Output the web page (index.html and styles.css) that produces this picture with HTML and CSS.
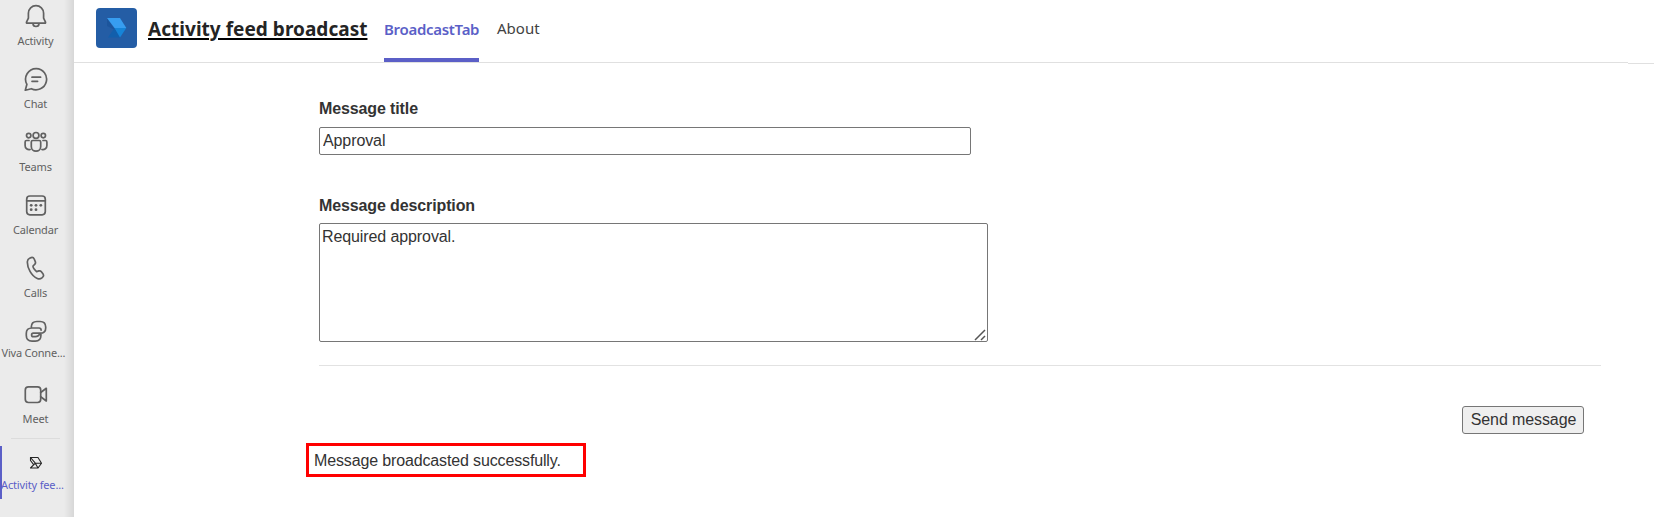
FILE: index.html
```
<!DOCTYPE html>
<html lang="en">
<head>
<meta charset="utf-8">
<title>Activity feed broadcast</title>
<link rel="stylesheet" href="styles.css">
</head>
<body>
<div class="app">
  <nav class="rail">
    <a class="rail-item"><svg class="icon" viewBox="0 0 24 24"><path d="M12 1.6a7.6 7.6 0 0 0-7.6 7.6v5L2.5 18.2q-.3 1 .7 1h17.6q1 0 .7-1l-1.9-4v-5A7.6 7.6 0 0 0 12 1.6zM9 19.5a3 3 0 0 0 6 0"/></svg><span class="label">Activity</span></a>
    <a class="rail-item"><svg class="icon" viewBox="0 0 24 24"><path d="M12.3 1.6a10.600 10.600 0 1 1-5 20.100L1.300 23.200l1.600-5.900A10.600 10.600 0 0 1 12.300 1.600zM8 10.200h8.600M8 14.300h5.600"/></svg><span class="label">Chat</span></a>
    <a class="rail-item"><svg class="icon" viewBox="0 0 24 24"><circle cx="12" cy="5.400" r="2.900"/><circle cx="4.700" cy="5.600" r="2.200"/><circle cx="19.300" cy="5.600" r="2.200"/><path d="M8.800 10.500h6.400q1.500 0 1.500 1.500v4.500a4.700 4.700 0 0 1-9.400 0V12q0-1.500 1.500-1.500zM5 10.500H2.600q-1.500 0-1.500 1.500v3.500a4 4 0 0 0 5 4M19 10.500h2.400q1.500 0 1.500 1.500v3.500a4 4 0 0 1-5 4"/></svg><span class="label">Teams</span></a>
    <a class="rail-item"><svg class="icon" viewBox="0 0 24 24"><rect x="2.700" y="3" width="18.600" height="18.800" rx="3.200"/><path d="M2.700 7.800h18.600"/><g class="dots"><circle cx="7.200" cy="12.300" r="1.400"/><circle cx="12" cy="12.300" r="1.400"/><circle cx="16.800" cy="12.300" r="1.400"/><circle cx="7.200" cy="16.700" r="1.400"/><circle cx="12" cy="16.700" r="1.400"/></g></svg><span class="label">Calendar</span></a>
    <a class="rail-item"><svg class="icon" viewBox="0 0 24 24"><path d="M5.600 2.200l1.600-.6q2.100-.6 3 1.400l1.100 2.600q.6 1.600-.6 2.700L9 10q-.2 2.200 3.600 5.600l2.300-.7q1.500-.4 2.500.9l1.700 2.300q1 1.600-.3 2.900l-.9.900q-2 1.700-4.600.6C7.500 20 3 11.500 3.400 5.500q.2-2.600 2.200-3.300z"/></svg><span class="label">Calls</span></a>
    <a class="rail-item viva"><svg class="icon" viewBox="0 0 24 24"><path d="M7.300 8.900V8.100q0-5.600 5.600-5.600h3.200q5.600 0 5.600 5.600v.8q0 5.300-5.600 5.300H9.300a1.700 1.700 0 0 0 0 3.400h2M16.900 14.300v2.200q0 5.600-5.600 5.600H8q-5.700 0-5.700-5.600v-2.200q0-5.300 5.700-5.300h7.100a2 2 0 0 1 2 2.200M11.300 17.600q3.600 0 4.600-3.300"/></svg><span class="label">Viva Conne...</span></a>
    <a class="rail-item"><svg class="icon" viewBox="0 0 24 24"><rect x="1.300" y="4.800" width="15.400" height="15.700" rx="3.200"/><path d="M16.700 10.500l5.600-4.200V19l-5.600-4.200"/></svg><span class="label">Meet</span></a>
    <div class="rail-divider"></div>
    <a class="rail-item active"><svg class="icon bird" viewBox="0 0 24 24"><path d="M6.500 6.500h7.500l3.500 5.700-3.500 4.800H6.500l4.800-4.800zM6.500 6.500l4.800 5.700h6.200M11.300 12.200L14 17M6.500 6.500v3l3.300 4.300"/></svg><span class="label">Activity fee...</span></a>
  </nav>
  <div class="main">
    <header class="topbar">
      <svg class="logo" viewBox="0 0 41 40"><rect width="41" height="40" rx="4" fill="#245da5"/><path d="M11 10v8l8 4z" fill="#1c559c"/><path d="M18.500 20L12 29.500h12z" fill="#125fac"/><path d="M11 10h13l6.300 10H18.500z" fill="#379df0"/><path d="M18.500 20h11.800L24 29.500z" fill="#1684d8"/></svg>
      <h1 class="title">Activity feed broadcast</h1>
      <a class="tab selected">BroadcastTab</a>
      <a class="tab about">About</a>
      <span class="topbar-end"></span>
    </header>
    <main class="form">
      <label class="field-label" for="title">Message title</label>
      <input class="text-input" id="title" type="text" value="Approval">
      <label class="field-label description-label" for="description">Message description</label>
      <div class="area-wrap">
        <textarea class="text-area" id="description">Required approval.</textarea>
        <svg class="grip" viewBox="0 0 12 12"><path d="M1 11L11 1M7 11l4-4"/></svg>
      </div>
      <div class="rule"></div>
      <button class="send" type="button">Send message</button>
      <div class="status">Message broadcasted successfully.</div>
    </main>
  </div>
</div>
</body>
</html>
```
FILE: styles.css
```
* { box-sizing: border-box; }
body { margin: 0; background: #fff; color: #333; font-family: "Liberation Sans", Arial, sans-serif; font-size: 16px; overflow: hidden; }
.app { display: flex; height: 518px; }
.rail { display: flex; flex-direction: column; flex: none; width: 74px; height: 517px; padding-top: 4px; background: linear-gradient(to right, #ebebeb 64px, #e5e5e5 67px, #d7d7d7 74px); font-family: "Noto Sans", sans-serif; }
.rail-item { display: flex; flex-direction: column; align-items: center; flex: none; width: 71px; height: 63px; color: #616161; font-size: 11px; line-height: 15px; white-space: nowrap; }
.icon { flex: none; width: 24px; height: 24px; fill: none; stroke: #616161; stroke-width: 1.7; stroke-linejoin: round; stroke-linecap: round; }
.dots { fill: #616161; stroke: none; }
.label { margin-top: 5px; letter-spacing: -0.15px; }
.viva .label, .active .label { margin-top: 2px; width: 68px; letter-spacing: -0.2px; }
.rail-divider { flex: none; width: 49px; height: 1px; margin: -7px 0 7px 11px; background: #dcdcdc; }
.active { height: 53px; padding-top: 5px; padding-right: 2px; border-left: 2px solid #5b5fc7; color: #5b5fc7; }
.active .label { width: 69px; margin-left: 0; letter-spacing: -0.15px; }
.bird { stroke: #242424; stroke-width: 1.1; }
.main { flex: 1; min-width: 0; }
.topbar { display: flex; align-items: flex-start; height: 63px; padding-left: 22px; background: linear-gradient(#e0e0e0, #e0e0e0) 0 62px / 1554px 1px no-repeat; font-family: "Noto Sans", sans-serif; }
.logo { flex: none; width: 41px; height: 40px; margin-top: 8px; }
.title { flex: none; width: 220px; margin: 15px 16px 0 11px; color: #242424; font-size: 19px; font-weight: 700; line-height: 28px; letter-spacing: 0.03px; white-space: nowrap; text-decoration: underline; text-decoration-color: #000; text-decoration-thickness: 2px; text-underline-offset: 2px; }
.tab { height: 62px; padding-top: 18px; color: #424242; font-size: 15px; line-height: 22px; }
.selected { width: 95px; border-bottom: 4px solid #5b5fc7; color: #5b5fc7; font-weight: 600; letter-spacing: -0.3px; }
.about { margin-left: 18px; padding-top: 17px; }
.topbar-end { width: 26px; height: 1px; margin: 63px 0 0 auto; background: #e0e0e0; }
.form { display: flex; flex-direction: column; align-items: flex-start; padding: 36px 53px 0 245px; }
.field-label { font-weight: 700; line-height: 20px; letter-spacing: -0.12px; }
.text-input, .text-area { border: 1px solid #767676; border-radius: 2px; color: #333; background: #fff; font: 16px "Liberation Sans", Arial, sans-serif; letter-spacing: -0.1px; }
.text-input { width: 652px; height: 28px; margin-top: 8px; padding: 1px 3px; }
.description-label { margin-top: 41px; }
.area-wrap { position: relative; width: 669px; height: 119px; margin-top: 7px; }
.text-area { display: block; width: 100%; height: 100%; padding: 4px 2px; resize: none; }
.grip { position: absolute; right: 2px; bottom: 1px; width: 12px; height: 12px; fill: none; stroke: #555; stroke-width: 1.5; }
.rule { width: 1282px; height: 1px; margin-top: 23px; background: #e2e2e2; }
.send { align-self: flex-end; width: 122px; height: 28px; margin: 40px 17px 0 0; padding: 0 0 0 1px; border: 1px solid #767676; border-radius: 3px; background: #efefef; color: #333; font: 16px "Liberation Sans", Arial, sans-serif; letter-spacing: -0.1px; }
.status { width: 280px; height: 34px; margin: 9px 0 0 -13px; padding-left: 5px; border: 3px solid #f00; line-height: 30px; letter-spacing: -0.14px; white-space: nowrap; }
```
